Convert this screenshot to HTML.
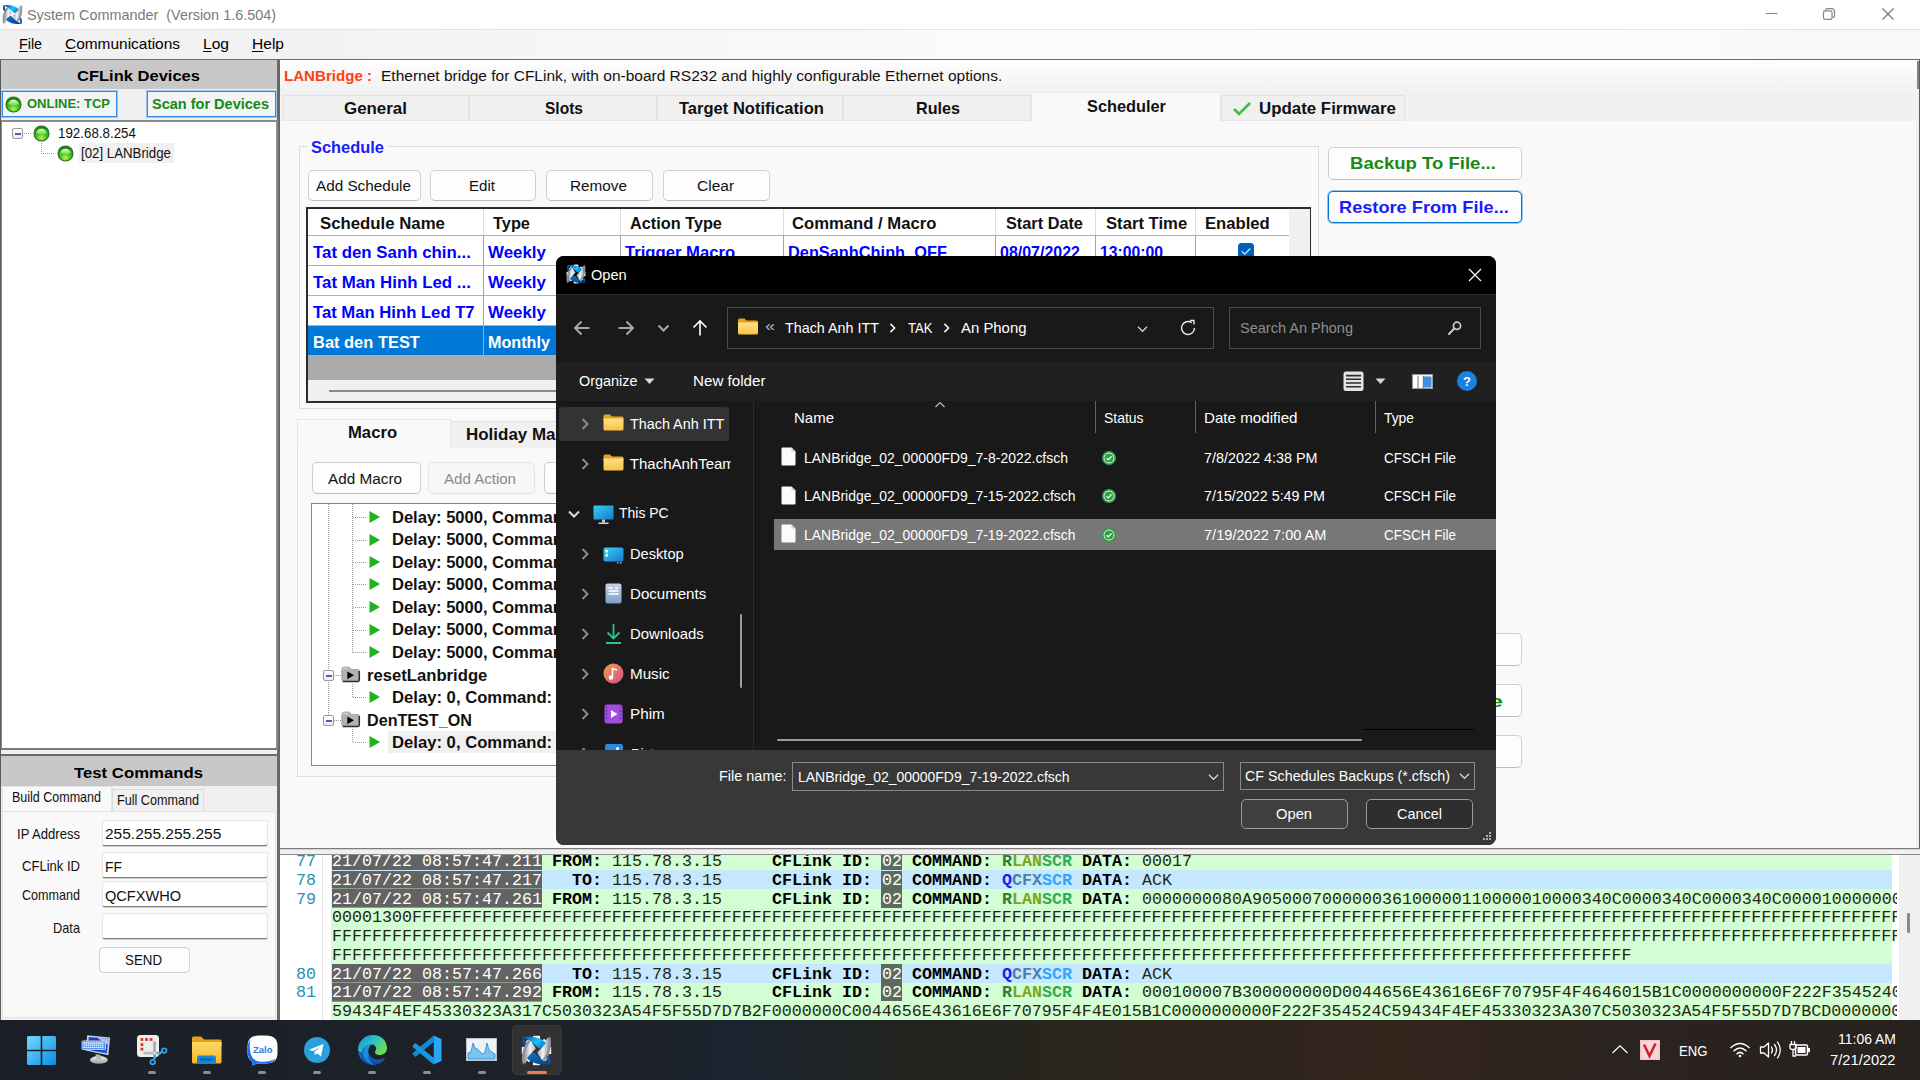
<!DOCTYPE html>
<html><head><meta charset="utf-8"><title>System Commander</title>
<style>
*{box-sizing:border-box;margin:0;padding:0}
html,body{width:1920px;height:1080px;overflow:hidden;background:#f0f0f0;font-family:"Liberation Sans",sans-serif}
.a{position:absolute}
.t{position:absolute;white-space:nowrap;line-height:1;transform-origin:0 50%}
.b{font-weight:bold}
svg{display:block;overflow:visible}
</style></head><body>
<!-- chrome -->
<div class="a" style="left:0px;top:0px;width:1920px;height:29px;background:#fff"></div>
<svg class="a" style="left:2px;top:4px" width="21" height="21" viewBox="2.800 2.800 26.400 26.400"><defs><linearGradient id="abt" x1="0" y1="0" x2="1" y2="0.6"><stop offset="0" stop-color="#0a57a8"/><stop offset="0.65" stop-color="#19c2ff"/><stop offset="1" stop-color="#0c7fd0"/></linearGradient><linearGradient id="adt" x1="0" y1="0" x2="1" y2="1"><stop offset="0" stop-color="#1173c4"/><stop offset="1" stop-color="#0a3f8c"/></linearGradient><linearGradient id="ast" x1="0" y1="0" x2="1" y2="0"><stop offset="0" stop-color="#9b9ea4"/><stop offset="0.5" stop-color="#f2f3f5"/><stop offset="1" stop-color="#a9acb2"/></linearGradient></defs><g fill="#f4f6f8"><rect x="13" y="3.500" width="6" height="6"/><rect x="13" y="22.500" width="6" height="6"/><rect x="3.500" y="13" width="6" height="6"/><rect x="22.500" y="13" width="6" height="6"/><rect x="7" y="7" width="5" height="5" transform="rotate(45 9.500 9.500)"/><rect x="20" y="7" width="5" height="5" transform="rotate(45 22.500 9.500)"/><rect x="7" y="20" width="5" height="5" transform="rotate(45 9.500 22.500)"/><rect x="20" y="20" width="5" height="5" transform="rotate(45 22.500 22.500)"/></g><path d="M27.500 4 C29.500 9 28 20 23 25 L21 23 C25 18 26.500 10 25.500 6 Z" fill="#8f939a"/><path d="M4.500 28 C2.500 23 4 12 9 7 L11 9 C7 14 5.500 22 6.500 26 Z" fill="#8f939a"/><path d="M6.500 27.500 C5 21 7 12.500 10.500 9 C13 10 14.500 12 15.500 14.500 C11.500 17.500 8.500 22.500 6.500 27.500 Z" fill="url(#ast)"/><path d="M25.500 4.500 C27 11 25 19.500 21.500 23 C19 22 17.500 20 16.500 17.500 C20.500 14.500 23.500 9.500 25.500 4.500 Z" fill="url(#ast)"/><path d="M4.500 4.500 C11 3 20 5 24 9.500 C22 12.500 20 14 18 14.500 C14.500 10.500 9.500 6.500 4.500 4.500 Z" fill="url(#abt)"/><path d="M4.500 4.500 C3.500 7 4 10 5.500 12 L7.500 10.500 C6.500 9 6 7 6.500 5.500 Z" fill="#0a4fa0"/><path d="M27.500 27.500 C21 29 12 27 8 22.500 C10 19.500 12 18 14 17.500 C17.500 21.500 22.500 25.500 27.500 27.500 Z" fill="url(#adt)"/><path d="M27.500 27.500 C28.500 25 28 22 26.500 20 L24.500 21.500 C25.500 23 26 25 25.500 26.500 Z" fill="#0b59ac"/></svg>
<div class="t" style="left:27.00px;top:7.15px;font-size:15px;color:#7a7a7a;transform:scaleX(0.9603);">System Commander &nbsp;(Version 1.6.504)</div>
<svg class="a" style="left:1750px;top:0" width="170" height="29" viewBox="0 0 170 29"><path d="M15.5 13.5 H27.5" stroke="#8a8a8a" stroke-width="1"/><rect x="73.500" y="10.800" width="8.500" height="8.500" rx="1.600" fill="none" stroke="#868686" stroke-width="1.200"/><path d="M75.700 10.800 V10 Q75.700 8.700 77.200 8.700 H81.500 Q84.500 8.700 84.500 11.700 V16 Q84.500 17.300 83.200 17.300 H82.200" fill="none" stroke="#868686" stroke-width="1.200"/><path d="M132.500 8.500 L143.500 19.500 M143.500 8.500 L132.500 19.500" stroke="#727272" stroke-width="1.100"/></svg>
<div class="a" style="left:0px;top:29px;width:1920px;height:30px;background:linear-gradient(90deg,#f0f0f0 0%,#f3f3f3 18%,#fafafa 48%,#fcfcfc 80%,#f8f8f8 100%);border-top:1px solid #e2e2e2"></div>
<div class="t" style="left:19.00px;top:36.25px;font-size:15px;color:#000;transform:scaleX(0.9515);"><span style="text-decoration:underline;text-underline-offset:2px">F</span>ile</div>
<div class="t" style="left:65.00px;top:36.25px;font-size:15px;color:#000;transform:scaleX(1.0294);"><span style="text-decoration:underline;text-underline-offset:2px">C</span>ommunications</div>
<div class="t" style="left:203.00px;top:36.25px;font-size:15px;color:#000;transform:scaleX(1.0388);"><span style="text-decoration:underline;text-underline-offset:2px">L</span>og</div>
<div class="t" style="left:252.00px;top:36.25px;font-size:15px;color:#000;transform:scaleX(1.0373);"><span style="text-decoration:underline;text-underline-offset:2px">H</span>elp</div>
<div class="a" style="left:0px;top:59px;width:1920px;height:1px;background:#6a6a6a"></div>
<div class="a" style="left:0px;top:60px;width:1920px;height:1px;background:#b4b4b4"></div>
<!-- left -->
<div class="a" style="left:0px;top:59px;width:279px;height:961px;background:#f0f0f0;border-left:1px solid #5c5c5c;border-right:2px solid #6a6a6a;border-top:1px solid #6a6a6a"></div>
<div class="a" style="left:1px;top:60px;width:276px;height:29px;background:#c8c8c8"></div>
<div class="t" style="left:77.00px;top:68.41px;font-size:15.5px;color:#000;font-weight:bold;transform:scaleX(1.0655);">CFLink Devices</div>
<div class="a" style="left:2px;top:91px;width:115px;height:26px;background:#f4f4f4;border:1px solid #2f8be6;box-shadow:0 0 0 1px rgba(60,145,230,.45);"></div>
<svg class="a" style="left:4.5px;top:95.5px" width="17" height="17" viewBox="0 0 17 17"><defs><radialGradient id="lg" cx="50%" cy="78%" r="70%"><stop offset="0" stop-color="#b8f05a"/><stop offset="0.45" stop-color="#43c91a"/><stop offset="1" stop-color="#0f8a06"/></radialGradient><linearGradient id="lh" x1="0" y1="0" x2="0" y2="1"><stop offset="0" stop-color="#f4ffe8" stop-opacity=".95"/><stop offset="1" stop-color="#b8f08a" stop-opacity=".55"/></linearGradient></defs><circle cx="8.5" cy="8.5" r="7.5" fill="url(#lg)" stroke="#2f6a22" stroke-width="1.1"/><path d="M3.1000000000000005 8.35 A5.55 6.0 0 0 1 13.899999999999999 8.35 Q8.5 9.4 3.1000000000000005 8.35 Z" fill="url(#lh)"/></svg>
<div class="t" style="left:27.00px;top:97.39px;font-size:13.5px;color:#168a16;font-weight:bold;transform:scaleX(0.9623);">ONLINE: TCP</div>
<div class="a" style="left:147px;top:91px;width:129px;height:26px;background:#f4f4f4;border:1px solid #2f8be6;box-shadow:0 0 0 1px rgba(60,145,230,.45);"></div>
<div class="t" style="left:152.00px;top:96.05px;font-size:15px;color:#168a16;font-weight:bold;transform:scaleX(0.9678);">Scan for Devices</div>
<div class="a" style="left:1px;top:120px;width:277px;height:630px;background:#fff;border:2px solid #8c8c8c;border-left:1px solid #8c8c8c;border-bottom:2px solid #7a7a7a"></div>
<div class="a" style="left:12px;top:128px;width:11px;height:11px;background:linear-gradient(#fff,#eee);border:1px solid #9a9a9a;border-radius:2px"></div>
<div class="a" style="left:14.5px;top:133px;width:6px;height:1.5px;background:#4a5fc0"></div>
<div class="a" style="left:24px;top:133px;width:7px;height:1px;background:repeating-linear-gradient(90deg,#999 0 1px,transparent 1px 2px)"></div>
<svg class="a" style="left:32.5px;top:124.5px" width="17" height="17" viewBox="0 0 17 17"><defs><radialGradient id="lg" cx="50%" cy="78%" r="70%"><stop offset="0" stop-color="#b8f05a"/><stop offset="0.45" stop-color="#43c91a"/><stop offset="1" stop-color="#0f8a06"/></radialGradient><linearGradient id="lh" x1="0" y1="0" x2="0" y2="1"><stop offset="0" stop-color="#f4ffe8" stop-opacity=".95"/><stop offset="1" stop-color="#b8f08a" stop-opacity=".55"/></linearGradient></defs><circle cx="8.5" cy="8.5" r="7.5" fill="url(#lg)" stroke="#2f6a22" stroke-width="1.1"/><path d="M3.1000000000000005 8.35 A5.55 6.0 0 0 1 13.899999999999999 8.35 Q8.5 9.4 3.1000000000000005 8.35 Z" fill="url(#lh)"/></svg>
<div class="t" style="left:58.00px;top:125.80px;font-size:14.7px;color:#111;transform:scaleX(0.9087);">192.68.8.254</div>
<div class="a" style="left:41px;top:141px;width:1px;height:12px;background:repeating-linear-gradient(180deg,#999 0 1px,transparent 1px 2px)"></div>
<div class="a" style="left:41px;top:153px;width:14px;height:1px;background:repeating-linear-gradient(90deg,#999 0 1px,transparent 1px 2px)"></div>
<svg class="a" style="left:56.5px;top:144.5px" width="17" height="17" viewBox="0 0 17 17"><defs><radialGradient id="lg" cx="50%" cy="78%" r="70%"><stop offset="0" stop-color="#b8f05a"/><stop offset="0.45" stop-color="#43c91a"/><stop offset="1" stop-color="#0f8a06"/></radialGradient><linearGradient id="lh" x1="0" y1="0" x2="0" y2="1"><stop offset="0" stop-color="#f4ffe8" stop-opacity=".95"/><stop offset="1" stop-color="#b8f08a" stop-opacity=".55"/></linearGradient></defs><circle cx="8.5" cy="8.5" r="7.5" fill="url(#lg)" stroke="#2f6a22" stroke-width="1.1"/><path d="M3.1000000000000005 8.35 A5.55 6.0 0 0 1 13.899999999999999 8.35 Q8.5 9.4 3.1000000000000005 8.35 Z" fill="url(#lh)"/></svg>
<div class="a" style="left:79px;top:143px;width:95px;height:20px;background:#f0f0f0"></div>
<div class="t" style="left:81.00px;top:145.80px;font-size:14.7px;color:#111;transform:scaleX(0.9028);">[02] LANBridge</div>
<div class="a" style="left:1px;top:754px;width:276px;height:2px;background:#6a6a6a"></div>
<div class="a" style="left:1px;top:756px;width:276px;height:30px;background:#c8c8c8"></div>
<div class="t" style="left:74.00px;top:764.90px;font-size:15.5px;color:#000;font-weight:bold;transform:scaleX(1.0801);">Test Commands</div>
<div class="a" style="left:2px;top:786px;width:110px;height:26px;background:#f9f9f9;border:1px solid #e3e3e3;border-bottom:none"></div>
<div class="t" style="left:12.00px;top:790.39px;font-size:14.5px;color:#111;transform:scaleX(0.8627);">Build Command</div>
<div class="a" style="left:112px;top:789px;width:92px;height:22px;background:#f0f0f0;border:1px solid #dcdcdc;border-bottom:none"></div>
<div class="t" style="left:117.00px;top:792.89px;font-size:14.5px;color:#111;transform:scaleX(0.8697);">Full Command</div>
<div class="a" style="left:2px;top:811px;width:274px;height:207px;background:#f9f9f9;border:1px solid #e3e3e3"></div>
<div class="t" style="left:17.00px;top:826.89px;font-size:14.5px;color:#111;transform:scaleX(0.9018);">IP Address</div>
<div class="a" style="left:102px;top:820px;width:166px;height:26px;background:#fff;border:1px solid #e6e6e6;border-bottom:1px solid #7e7e7e;box-shadow:0 1px 0 #cfcfcf;border-radius:3px"></div>
<div class="t" style="left:105.00px;top:826.40px;font-size:15.5px;color:#111;">255.255.255.255</div>
<div class="t" style="left:22.00px;top:859.39px;font-size:14.5px;color:#111;transform:scaleX(0.8998);">CFLink ID</div>
<div class="a" style="left:102px;top:852px;width:166px;height:26px;background:#fff;border:1px solid #e6e6e6;border-bottom:1px solid #7e7e7e;box-shadow:0 1px 0 #cfcfcf;border-radius:3px"></div>
<div class="t" style="left:105.00px;top:858.90px;font-size:15.5px;color:#111;transform:scaleX(0.8977);">FF</div>
<div class="t" style="left:22.00px;top:888.39px;font-size:14.5px;color:#111;transform:scaleX(0.8671);">Command</div>
<div class="a" style="left:102px;top:881px;width:166px;height:26px;background:#fff;border:1px solid #e6e6e6;border-bottom:1px solid #7e7e7e;box-shadow:0 1px 0 #cfcfcf;border-radius:3px"></div>
<div class="t" style="left:105.00px;top:887.90px;font-size:15.5px;color:#111;transform:scaleX(0.9390);">QCFXWHO</div>
<div class="t" style="left:53.00px;top:920.89px;font-size:14.5px;color:#111;transform:scaleX(0.8815);">Data</div>
<div class="a" style="left:102px;top:913px;width:166px;height:26px;background:#fff;border:1px solid #e6e6e6;border-bottom:1px solid #7e7e7e;box-shadow:0 1px 0 #cfcfcf;border-radius:3px"></div>
<div class="a" style="left:99px;top:947px;width:91px;height:26px;background:#fdfdfd;border:1px solid #d2d2d2;border-radius:4px"></div>
<div class="t" style="left:125.00px;top:952.40px;font-size:15.5px;color:#111;transform:scaleX(0.8592);">SEND</div>
<!-- right -->
<div class="a" style="left:280px;top:60px;width:1640px;height:789px;background:#f9f9f9"></div>
<div class="a" style="left:280px;top:60px;width:1640px;height:33px;background:linear-gradient(#fefefe,#f1f1f1)"></div>
<div class="a" style="left:280px;top:93px;width:1640px;height:28px;background:#f0f0f0"></div>
<div class="a" style="left:1916px;top:121px;width:3px;height:727px;background:#f0f0f0"></div>
<div class="a" style="left:1919px;top:60px;width:1px;height:790px;background:#5e5e5e"></div>
<div class="a" style="left:1917px;top:61px;width:2px;height:28px;background:#858585"></div>
<div class="a" style="left:280px;top:848px;width:1640px;height:1px;background:#7c7c7c"></div>
<div class="a" style="left:280px;top:849px;width:1640px;height:1px;background:#d4d4d4"></div>
<div class="a" style="left:280px;top:850px;width:1640px;height:4px;background:#f0f0f0"></div>
<div class="a" style="left:280px;top:854px;width:1640px;height:1px;background:#8c8c8c"></div>
<div class="a" style="left:278px;top:59px;width:2px;height:961px;background:#686868"></div>
<div class="t" style="left:284.00px;top:68.41px;font-size:15.5px;color:#ff4010;font-weight:bold;transform:scaleX(0.9733);">LANBridge :</div>
<div class="t" style="left:381.00px;top:68.41px;font-size:15.5px;color:#111;">Ethernet bridge for CFLink, with on-board RS232 and highly configurable Ethernet options.</div>
<div class="a" style="left:283px;top:95px;width:186px;height:26px;background:#f0f0f0;border:1px solid #e2e2e2;border-bottom:none"></div>
<div class="t" style="left:344.00px;top:100.63px;font-size:16.67px;color:#111;font-weight:bold;transform:scaleX(1.0148);">General</div>
<div class="a" style="left:469px;top:95px;width:188px;height:26px;background:#f0f0f0;border:1px solid #e2e2e2;border-bottom:none"></div>
<div class="t" style="left:545.00px;top:100.63px;font-size:16.67px;color:#111;font-weight:bold;transform:scaleX(0.9324);">Slots</div>
<div class="a" style="left:657px;top:95px;width:186px;height:26px;background:#f0f0f0;border:1px solid #e2e2e2;border-bottom:none"></div>
<div class="t" style="left:679.00px;top:100.63px;font-size:16.67px;color:#111;font-weight:bold;transform:scaleX(0.9930);">Target Notification</div>
<div class="a" style="left:843px;top:95px;width:188px;height:26px;background:#f0f0f0;border:1px solid #e2e2e2;border-bottom:none"></div>
<div class="t" style="left:916.00px;top:100.63px;font-size:16.67px;color:#111;font-weight:bold;transform:scaleX(0.9693);">Rules</div>
<div class="a" style="left:1221px;top:95px;width:184px;height:26px;background:#f0f0f0;border:1px solid #e2e2e2;border-bottom:none"></div>
<svg class="a" style="left:1232px;top:100px" width="20" height="16" viewBox="0 0 20 16"><path d="M2 9 L7 14 L18 3" fill="none" stroke="#3fc03a" stroke-width="2.6"/></svg>
<div class="t" style="left:1259.00px;top:100.63px;font-size:16.67px;color:#111;font-weight:bold;transform:scaleX(1.0129);">Update Firmware</div>
<div class="a" style="left:283px;top:120px;width:748px;height:1px;background:#e6e6e6"></div>
<div class="a" style="left:1221px;top:120px;width:184px;height:1px;background:#e6e6e6"></div>
<div class="a" style="left:1031px;top:92px;width:190px;height:30px;background:#f9f9f9;border:1px solid #e8e8e8;border-bottom:none"></div>
<div class="t" style="left:1087.00px;top:98.63px;font-size:16.67px;color:#111;font-weight:bold;transform:scaleX(0.9801);">Scheduler</div>
<div class="a" style="left:299px;top:146px;width:1020px;height:263px;border:1px solid #dcdcdc"></div>
<div class="a" style="left:308px;top:140px;width:80px;height:14px;background:#f9f9f9"></div>
<div class="t" style="left:311.00px;top:139.63px;font-size:16.67px;color:#1a1aff;font-weight:bold;transform:scaleX(0.9850);">Schedule</div>
<div class="a" style="left:308px;top:170px;width:113px;height:31px;background:#fdfdfd;border:1px solid #d0d0d0;border-bottom-color:#bdbdbd;border-radius:5px;"></div><div class="t" style="left:316.00px;top:178.41px;font-size:15.5px;color:#111;transform:scaleX(0.9842);">Add Schedule</div>
<div class="a" style="left:430px;top:170px;width:106px;height:31px;background:#fdfdfd;border:1px solid #d0d0d0;border-bottom-color:#bdbdbd;border-radius:5px;"></div><div class="t" style="left:469.00px;top:178.41px;font-size:15.5px;color:#111;transform:scaleX(0.9734);">Edit</div>
<div class="a" style="left:546px;top:170px;width:107px;height:31px;background:#fdfdfd;border:1px solid #d0d0d0;border-bottom-color:#bdbdbd;border-radius:5px;"></div><div class="t" style="left:570.00px;top:178.41px;font-size:15.5px;color:#111;transform:scaleX(0.9876);">Remove</div>
<div class="a" style="left:663px;top:170px;width:107px;height:31px;background:#fdfdfd;border:1px solid #d0d0d0;border-bottom-color:#bdbdbd;border-radius:5px;"></div><div class="t" style="left:697.00px;top:178.41px;font-size:15.5px;color:#111;">Clear</div>
<div class="a" style="left:306px;top:207px;width:1005px;height:196px;background:#ababab;border:2px solid #2c2c2c;border-right-width:1px"></div>
<div class="a" style="left:308px;top:209px;width:981px;height:27px;background:#fff;border-bottom:1px solid #b0b0b0"></div>
<div class="a" style="left:1289px;top:209px;width:21px;height:171px;background:#f0f0f0"></div>
<div class="a" style="left:308px;top:380px;width:1002px;height:21px;background:#f0f0f0"></div>
<div class="a" style="left:329px;top:390px;width:960px;height:2px;background:#8a8a8a"></div>
<div class="t" style="left:320.00px;top:215.63px;font-size:16.67px;color:#111;font-weight:bold;transform:scaleX(1.0069);">Schedule Name</div>
<div class="t" style="left:493.00px;top:215.63px;font-size:16.67px;color:#111;font-weight:bold;transform:scaleX(0.9822);">Type</div>
<div class="t" style="left:630.00px;top:215.63px;font-size:16.67px;color:#111;font-weight:bold;transform:scaleX(0.9770);">Action Type</div>
<div class="t" style="left:792.00px;top:215.63px;font-size:16.67px;color:#111;font-weight:bold;">Command / Macro</div>
<div class="t" style="left:1006.00px;top:215.63px;font-size:16.67px;color:#111;font-weight:bold;transform:scaleX(0.9778);">Start Date</div>
<div class="t" style="left:1106.00px;top:215.63px;font-size:16.67px;color:#111;font-weight:bold;">Start Time</div>
<div class="t" style="left:1205.00px;top:215.63px;font-size:16.67px;color:#111;font-weight:bold;">Enabled</div>
<div class="a" style="left:308px;top:236px;width:981px;height:30px;background:#fff;border-bottom:1px solid #b0b0b0"></div>
<div class="t" style="left:313.00px;top:245.13px;font-size:16.67px;color:#0000ff;font-weight:bold;transform:scaleX(1.0114);">Tat den Sanh chin...</div>
<div class="t" style="left:488.00px;top:245.13px;font-size:16.67px;color:#0000ff;font-weight:bold;transform:scaleX(1.0149);">Weekly</div>
<div class="a" style="left:308px;top:266px;width:981px;height:30px;background:#fff;border-bottom:1px solid #b0b0b0"></div>
<div class="t" style="left:313.00px;top:275.13px;font-size:16.67px;color:#0000ff;font-weight:bold;transform:scaleX(1.0115);">Tat Man Hinh Led ...</div>
<div class="t" style="left:488.00px;top:275.13px;font-size:16.67px;color:#0000ff;font-weight:bold;transform:scaleX(1.0149);">Weekly</div>
<div class="a" style="left:308px;top:296px;width:981px;height:30px;background:#fff;border-bottom:1px solid #b0b0b0"></div>
<div class="t" style="left:313.00px;top:305.13px;font-size:16.67px;color:#0000ff;font-weight:bold;">Tat Man Hinh Led T7</div>
<div class="t" style="left:488.00px;top:305.13px;font-size:16.67px;color:#0000ff;font-weight:bold;transform:scaleX(1.0149);">Weekly</div>
<div class="a" style="left:308px;top:326px;width:981px;height:30px;background:#0078d7;border-bottom:1px solid #b0b0b0"></div>
<div class="t" style="left:313.00px;top:335.13px;font-size:16.67px;color:#fff;font-weight:bold;transform:scaleX(0.9874);">Bat den TEST</div>
<div class="t" style="left:488.00px;top:335.13px;font-size:16.67px;color:#fff;font-weight:bold;transform:scaleX(0.9704);">Monthly</div>
<div class="t" style="left:625.00px;top:245.13px;font-size:16.67px;color:#0000ff;font-weight:bold;">Trigger Macro</div>
<div class="t" style="left:788.00px;top:245.13px;font-size:16.67px;color:#0000ff;font-weight:bold;transform:scaleX(0.9810);">DenSanhChinh_OFF</div>
<div class="t" style="left:1000.00px;top:245.13px;font-size:16.67px;color:#0000ff;font-weight:bold;transform:scaleX(0.9588);">08/07/2022</div>
<div class="t" style="left:1100.00px;top:245.13px;font-size:16.67px;color:#0000ff;font-weight:bold;transform:scaleX(0.9441);">13:00:00</div>
<div class="a" style="left:1238px;top:243px;width:16px;height:16px;background:#005fb8;border-radius:3.500px"></div>
<svg class="a" style="left:1238px;top:243px" width="16" height="16" viewBox="0 0 16 16"><path d="M3.800 8.300 L6.800 11.200 L12.200 5.500" fill="none" stroke="#dbe9f7" stroke-width="1.200"/></svg>
<div class="a" style="left:483px;top:209px;width:1px;height:26px;background:#dedede"></div>
<div class="a" style="left:483px;top:235px;width:1px;height:121px;background:#a6a6a6"></div>
<div class="a" style="left:620px;top:209px;width:1px;height:26px;background:#dedede"></div>
<div class="a" style="left:620px;top:235px;width:1px;height:121px;background:#a6a6a6"></div>
<div class="a" style="left:783px;top:209px;width:1px;height:26px;background:#dedede"></div>
<div class="a" style="left:783px;top:235px;width:1px;height:121px;background:#a6a6a6"></div>
<div class="a" style="left:995px;top:209px;width:1px;height:26px;background:#dedede"></div>
<div class="a" style="left:995px;top:235px;width:1px;height:121px;background:#a6a6a6"></div>
<div class="a" style="left:1095px;top:209px;width:1px;height:26px;background:#dedede"></div>
<div class="a" style="left:1095px;top:235px;width:1px;height:121px;background:#a6a6a6"></div>
<div class="a" style="left:1195px;top:209px;width:1px;height:26px;background:#dedede"></div>
<div class="a" style="left:1195px;top:235px;width:1px;height:121px;background:#a6a6a6"></div>
<div class="a" style="left:1328px;top:147px;width:194px;height:33px;background:#fdfdfd;border:1px solid #d0d0d0;border-bottom-color:#bdbdbd;border-radius:5px;"></div><div class="t" style="left:1350.00px;top:155.32px;font-size:17.3px;color:#168a16;font-weight:bold;transform:scaleX(1.0721);">Backup To File...</div>
<div class="a" style="left:1328px;top:191px;width:194px;height:32px;background:#fdfdfd;border:1px solid #d0d0d0;border-bottom-color:#bdbdbd;border-radius:5px;border:1px solid #0078d7;box-shadow:0 0 0 1px rgba(0,120,215,.4);"></div><div class="t" style="left:1339.00px;top:198.82px;font-size:17.3px;color:#1a1aff;font-weight:bold;transform:scaleX(1.0526);">Restore From File...</div>
<div class="a" style="left:1400px;top:633px;width:122px;height:33px;background:#fdfdfd;border:1px solid #d0d0d0;border-bottom-color:#bdbdbd;border-radius:5px;"></div><div class="t" style="left:0.00px;top:642.40px;font-size:15.5px;color:#111;"></div>
<div class="a" style="left:1400px;top:684px;width:122px;height:33px;background:#fdfdfd;border:1px solid #d0d0d0;border-bottom-color:#bdbdbd;border-radius:5px;"></div><div class="t" style="left:0.00px;top:693.40px;font-size:15.5px;color:#111;"></div>
<div class="t" style="left:1489.00px;top:693.32px;font-size:17.3px;color:#168a16;font-weight:bold;transform:scaleX(1.4550);">e</div>
<div class="a" style="left:1400px;top:735px;width:122px;height:33px;background:#fdfdfd;border:1px solid #d0d0d0;border-bottom-color:#bdbdbd;border-radius:5px;"></div><div class="t" style="left:0.00px;top:744.40px;font-size:15.5px;color:#111;"></div>
<div class="a" style="left:297px;top:447px;width:1030px;height:330px;border:1px solid #e0e0e0;background:#f9f9f9"></div>
<div class="a" style="left:450px;top:421px;width:160px;height:27px;background:#f0f0f0;border:1px solid #e2e2e2;border-bottom:none"></div>
<div class="t" style="left:466.00px;top:427.13px;font-size:16.67px;color:#111;font-weight:bold;transform:scaleX(1.0181);">Holiday Macro</div>
<div class="a" style="left:297px;top:419px;width:154px;height:30px;background:#f9f9f9;border:1px solid #e6e6e6;border-bottom:none"></div>
<div class="t" style="left:348.00px;top:424.63px;font-size:16.67px;color:#111;font-weight:bold;">Macro</div>
<div class="a" style="left:312px;top:462px;width:109px;height:32px;background:#fdfdfd;border:1px solid #d0d0d0;border-bottom-color:#bdbdbd;border-radius:5px;"></div><div class="t" style="left:328.00px;top:470.90px;font-size:15.5px;color:#111;transform:scaleX(0.9873);">Add Macro</div>
<div class="a" style="left:428px;top:462px;width:107px;height:32px;background:#fdfdfd;border:1px solid #d0d0d0;border-bottom-color:#bdbdbd;border-radius:5px;background:#f7f7f7;border-color:#e4e4e4;"></div><div class="t" style="left:444.00px;top:470.90px;font-size:15.5px;color:#8a8a8a;transform:scaleX(0.9715);">Add Action</div>
<div class="a" style="left:544px;top:462px;width:107px;height:32px;background:#fdfdfd;border:1px solid #d0d0d0;border-bottom-color:#bdbdbd;border-radius:5px;"></div><div class="t" style="left:0.00px;top:470.90px;font-size:15.5px;color:#111;"></div>
<div class="a" style="left:311px;top:503px;width:700px;height:263px;background:#fff;border:1px solid #828790"></div>
<div class="a" style="left:328px;top:504px;width:1px;height:217px;background:repeating-linear-gradient(180deg,#9a9a9a 0 1px,transparent 1px 2px)"></div>
<div class="a" style="left:352px;top:504px;width:1px;height:149px;background:repeating-linear-gradient(180deg,#9a9a9a 0 1px,transparent 1px 2px)"></div>
<div class="a" style="left:353px;top:517px;width:14px;height:1px;background:repeating-linear-gradient(90deg,#9a9a9a 0 1px,transparent 1px 2px)"></div>
<svg class="a" style="left:369px;top:510px" width="12" height="14" viewBox="0 0 12 14"><path d="M0.5 1 L11 7 L0.5 13 Z" fill="#1fb31f"/></svg>
<div class="t" style="left:392.00px;top:509.63px;font-size:16.67px;color:#111;font-weight:bold;transform:scaleX(0.9917);">Delay: 5000, Command:</div>
<div class="a" style="left:353px;top:540px;width:14px;height:1px;background:repeating-linear-gradient(90deg,#9a9a9a 0 1px,transparent 1px 2px)"></div>
<svg class="a" style="left:369px;top:533px" width="12" height="14" viewBox="0 0 12 14"><path d="M0.5 1 L11 7 L0.5 13 Z" fill="#1fb31f"/></svg>
<div class="t" style="left:392.00px;top:532.13px;font-size:16.67px;color:#111;font-weight:bold;transform:scaleX(0.9917);">Delay: 5000, Command:</div>
<div class="a" style="left:353px;top:562px;width:14px;height:1px;background:repeating-linear-gradient(90deg,#9a9a9a 0 1px,transparent 1px 2px)"></div>
<svg class="a" style="left:369px;top:555px" width="12" height="14" viewBox="0 0 12 14"><path d="M0.5 1 L11 7 L0.5 13 Z" fill="#1fb31f"/></svg>
<div class="t" style="left:392.00px;top:554.63px;font-size:16.67px;color:#111;font-weight:bold;transform:scaleX(0.9917);">Delay: 5000, Command:</div>
<div class="a" style="left:353px;top:584px;width:14px;height:1px;background:repeating-linear-gradient(90deg,#9a9a9a 0 1px,transparent 1px 2px)"></div>
<svg class="a" style="left:369px;top:577px" width="12" height="14" viewBox="0 0 12 14"><path d="M0.5 1 L11 7 L0.5 13 Z" fill="#1fb31f"/></svg>
<div class="t" style="left:392.00px;top:577.13px;font-size:16.67px;color:#111;font-weight:bold;transform:scaleX(0.9917);">Delay: 5000, Command:</div>
<div class="a" style="left:353px;top:607px;width:14px;height:1px;background:repeating-linear-gradient(90deg,#9a9a9a 0 1px,transparent 1px 2px)"></div>
<svg class="a" style="left:369px;top:600px" width="12" height="14" viewBox="0 0 12 14"><path d="M0.5 1 L11 7 L0.5 13 Z" fill="#1fb31f"/></svg>
<div class="t" style="left:392.00px;top:599.63px;font-size:16.67px;color:#111;font-weight:bold;transform:scaleX(0.9917);">Delay: 5000, Command:</div>
<div class="a" style="left:353px;top:630px;width:14px;height:1px;background:repeating-linear-gradient(90deg,#9a9a9a 0 1px,transparent 1px 2px)"></div>
<svg class="a" style="left:369px;top:623px" width="12" height="14" viewBox="0 0 12 14"><path d="M0.5 1 L11 7 L0.5 13 Z" fill="#1fb31f"/></svg>
<div class="t" style="left:392.00px;top:622.13px;font-size:16.67px;color:#111;font-weight:bold;transform:scaleX(0.9917);">Delay: 5000, Command:</div>
<div class="a" style="left:353px;top:652px;width:14px;height:1px;background:repeating-linear-gradient(90deg,#9a9a9a 0 1px,transparent 1px 2px)"></div>
<svg class="a" style="left:369px;top:645px" width="12" height="14" viewBox="0 0 12 14"><path d="M0.5 1 L11 7 L0.5 13 Z" fill="#1fb31f"/></svg>
<div class="t" style="left:392.00px;top:644.63px;font-size:16.67px;color:#111;font-weight:bold;transform:scaleX(0.9917);">Delay: 5000, Command:</div>
<div class="a" style="left:323px;top:670px;width:11px;height:11px;background:linear-gradient(#fff,#eee);border:1px solid #9a9a9a;border-radius:2px"></div><div class="a" style="left:325.5px;top:675px;width:6px;height:1.5px;background:#4a5fc0"></div>
<div class="a" style="left:334px;top:675px;width:7px;height:1px;background:repeating-linear-gradient(90deg,#9a9a9a 0 1px,transparent 1px 2px)"></div>
<svg class="a" style="left:341px;top:665.5px" width="20" height="17" viewBox="0 0 20 17"><path d="M0.800 4 Q0.800 1 3.500 1 H7 Q8.500 1 9.500 2.300 L10.500 3.500 H16.500 Q18.500 3.500 18.500 5.500 V13.500 Q18.500 15.200 17 15.200 H2.300 Q0.800 15.200 0.800 13.700 Z" fill="#b2b2b2" stroke="#9a9a9a" stroke-width="0.800"/><path d="M2.200 3.800 Q2.200 2.300 3.800 2.300 H7.200" fill="none" stroke="#dcdcdc" stroke-width="1"/><path d="M18.300 5 V14 Q18.300 15.400 17 15.400 H1.800" fill="none" stroke="#2c2c2c" stroke-width="1.500"/><path d="M6.300 5.500 L13 9.300 L6.300 13.200 Z" fill="#000"/></svg>
<div class="t" style="left:367.00px;top:667.63px;font-size:16.67px;color:#111;font-weight:bold;">resetLanbridge</div>
<div class="a" style="left:323px;top:715px;width:11px;height:11px;background:linear-gradient(#fff,#eee);border:1px solid #9a9a9a;border-radius:2px"></div><div class="a" style="left:325.5px;top:720px;width:6px;height:1.5px;background:#4a5fc0"></div>
<div class="a" style="left:334px;top:720px;width:7px;height:1px;background:repeating-linear-gradient(90deg,#9a9a9a 0 1px,transparent 1px 2px)"></div>
<svg class="a" style="left:341px;top:710.5px" width="20" height="17" viewBox="0 0 20 17"><path d="M0.800 4 Q0.800 1 3.500 1 H7 Q8.500 1 9.500 2.300 L10.500 3.500 H16.500 Q18.500 3.500 18.500 5.500 V13.500 Q18.500 15.200 17 15.200 H2.300 Q0.800 15.200 0.800 13.700 Z" fill="#b2b2b2" stroke="#9a9a9a" stroke-width="0.800"/><path d="M2.200 3.800 Q2.200 2.300 3.800 2.300 H7.200" fill="none" stroke="#dcdcdc" stroke-width="1"/><path d="M18.300 5 V14 Q18.300 15.400 17 15.400 H1.800" fill="none" stroke="#2c2c2c" stroke-width="1.500"/><path d="M6.300 5.500 L13 9.300 L6.300 13.200 Z" fill="#000"/></svg>
<div class="t" style="left:367.00px;top:712.63px;font-size:16.67px;color:#111;font-weight:bold;transform:scaleX(0.9689);">DenTEST_ON</div>
<div class="a" style="left:352px;top:684px;width:1px;height:14px;background:repeating-linear-gradient(180deg,#9a9a9a 0 1px,transparent 1px 2px)"></div>
<div class="a" style="left:353px;top:697px;width:14px;height:1px;background:repeating-linear-gradient(90deg,#9a9a9a 0 1px,transparent 1px 2px)"></div>
<svg class="a" style="left:369px;top:690px" width="12" height="14" viewBox="0 0 12 14"><path d="M0.5 1 L11 7 L0.5 13 Z" fill="#1fb31f"/></svg>
<div class="t" style="left:392.00px;top:690.13px;font-size:16.67px;color:#111;font-weight:bold;">Delay: 0, Command:</div>
<div class="a" style="left:388px;top:731px;width:300px;height:22px;background:#f0f0f0"></div>
<div class="a" style="left:352px;top:729px;width:1px;height:14px;background:repeating-linear-gradient(180deg,#9a9a9a 0 1px,transparent 1px 2px)"></div>
<div class="a" style="left:353px;top:742px;width:14px;height:1px;background:repeating-linear-gradient(90deg,#9a9a9a 0 1px,transparent 1px 2px)"></div>
<svg class="a" style="left:369px;top:735px" width="12" height="14" viewBox="0 0 12 14"><path d="M0.5 1 L11 7 L0.5 13 Z" fill="#1fb31f"/></svg>
<div class="t" style="left:392.00px;top:735.13px;font-size:16.67px;color:#111;font-weight:bold;">Delay: 0, Command:</div>
<!-- log -->
<div class="a" style="left:280px;top:855px;width:1639px;height:165px;background:#fff;overflow:hidden;font-family:'Liberation Mono',monospace;font-size:16.67px;line-height:18.75px;white-space:pre">
<div class="a" style="left:51px;top:-3.40px;width:1561px;height:19px;background:#d3fdd3"></div>
<div class="a" style="left:16px;top:-1.80px;width:20px;color:#2b91af;text-align:right">77</div>
<div class="a" style="left:52px;top:-3.10px;width:209.5px;height:17.6px;background:#636363;box-shadow:0 1px 0 #8f9a8f"></div>
<div class="a" style="left:52px;top:-1.80px;color:#fff">21/07/22 08:57:47.211</div>
<div class="a" style="left:272.0px;top:-1.80px;font-weight:bold">FROM:</div>
<div class="a" style="left:332.0px;top:-1.80px;color:#26260e">115.78.3.15</div>
<div class="a" style="left:492.0px;top:-1.80px;font-weight:bold">CFLink ID:</div>
<div class="a" style="left:601.0px;top:-3.10px;width:21.0px;height:18.2px;background:#5d6b5d"></div>
<div class="a" style="left:602.0px;top:-1.80px;color:#fff">02</div>
<div class="a" style="left:632.0px;top:-1.80px;font-weight:bold">COMMAND:</div>
<div class="a" style="left:722.0px;top:-1.80px;font-weight:bold"><span style="color:#2f7d32">R</span><span style="color:#7ba51c">LAN</span><span style="color:#2eab5c">SCR</span></div>
<div class="a" style="left:802.0px;top:-1.80px;font-weight:bold">DATA:</div>
<div class="a" style="left:862.0px;top:-1.80px;color:#26260e">00017</div>
<div class="a" style="left:51px;top:15.35px;width:1561px;height:19px;background:#c5e8ff"></div>
<div class="a" style="left:16px;top:16.95px;width:20px;color:#2b91af;text-align:right">78</div>
<div class="a" style="left:52px;top:15.65px;width:209.5px;height:17.6px;background:#636363;box-shadow:0 1px 0 #8f9a8f"></div>
<div class="a" style="left:52px;top:16.95px;color:#fff">21/07/22 08:57:47.217</div>
<div class="a" style="left:272.0px;top:16.95px;font-weight:bold">  TO:</div>
<div class="a" style="left:332.0px;top:16.95px;color:#26260e">115.78.3.15</div>
<div class="a" style="left:492.0px;top:16.95px;font-weight:bold">CFLink ID:</div>
<div class="a" style="left:601.0px;top:15.65px;width:21.0px;height:18.2px;background:#5d6b5d"></div>
<div class="a" style="left:602.0px;top:16.95px;color:#fff">02</div>
<div class="a" style="left:632.0px;top:16.95px;font-weight:bold">COMMAND:</div>
<div class="a" style="left:722.0px;top:16.95px;font-weight:bold"><span style="color:#1a1aff">Q</span><span style="color:#4a7fae">CFX</span><span style="color:#2fa6ff">SCR</span></div>
<div class="a" style="left:802.0px;top:16.95px;font-weight:bold">DATA:</div>
<div class="a" style="left:862.0px;top:16.95px;color:#26260e">ACK</div>
<div class="a" style="left:51px;top:34.10px;width:1561px;height:19px;background:#d3fdd3"></div>
<div class="a" style="left:16px;top:35.70px;width:20px;color:#2b91af;text-align:right">79</div>
<div class="a" style="left:52px;top:34.40px;width:209.5px;height:17.6px;background:#636363;box-shadow:0 1px 0 #8f9a8f"></div>
<div class="a" style="left:52px;top:35.70px;color:#fff">21/07/22 08:57:47.261</div>
<div class="a" style="left:272.0px;top:35.70px;font-weight:bold">FROM:</div>
<div class="a" style="left:332.0px;top:35.70px;color:#26260e">115.78.3.15</div>
<div class="a" style="left:492.0px;top:35.70px;font-weight:bold">CFLink ID:</div>
<div class="a" style="left:601.0px;top:34.40px;width:21.0px;height:18.2px;background:#5d6b5d"></div>
<div class="a" style="left:602.0px;top:35.70px;color:#fff">02</div>
<div class="a" style="left:632.0px;top:35.70px;font-weight:bold">COMMAND:</div>
<div class="a" style="left:722.0px;top:35.70px;font-weight:bold"><span style="color:#2f7d32">R</span><span style="color:#7ba51c">LAN</span><span style="color:#2eab5c">SCR</span></div>
<div class="a" style="left:802.0px;top:35.70px;font-weight:bold">DATA:</div>
<div class="a" style="left:862.0px;top:35.70px;color:#26260e">0000000080A905000700000036100000110000010000340C0000340C0000340C00001000000000</div>
<div class="a" style="left:51px;top:52.85px;width:1561px;height:19px;background:#d3fdd3"></div>
<div class="a" style="left:52px;top:54.45px;color:#26260e">00001300FFFFFFFFFFFFFFFFFFFFFFFFFFFFFFFFFFFFFFFFFFFFFFFFFFFFFFFFFFFFFFFFFFFFFFFFFFFFFFFFFFFFFFFFFFFFFFFFFFFFFFFFFFFFFFFFFFFFFFFFFFFFFFFFFFFFFFFFFFFFFFFFFFFFFFFFFFFFFFFF</div>
<div class="a" style="left:51px;top:71.60px;width:1561px;height:19px;background:#d3fdd3"></div>
<div class="a" style="left:52px;top:73.20px;color:#26260e">FFFFFFFFFFFFFFFFFFFFFFFFFFFFFFFFFFFFFFFFFFFFFFFFFFFFFFFFFFFFFFFFFFFFFFFFFFFFFFFFFFFFFFFFFFFFFFFFFFFFFFFFFFFFFFFFFFFFFFFFFFFFFFFFFFFFFFFFFFFFFFFFFFFFFFFFFFFFFFFFFFFFFFFFFF</div>
<div class="a" style="left:51px;top:90.35px;width:1561px;height:19px;background:#d3fdd3"></div>
<div class="a" style="left:52px;top:91.95px;color:#26260e">FFFFFFFFFFFFFFFFFFFFFFFFFFFFFFFFFFFFFFFFFFFFFFFFFFFFFFFFFFFFFFFFFFFFFFFFFFFFFFFFFFFFFFFFFFFFFFFFFFFFFFFFFFFFFFFFFFFFFFFFFFFFFFFFFF</div>
<div class="a" style="left:51px;top:109.10px;width:1561px;height:19px;background:#c5e8ff"></div>
<div class="a" style="left:16px;top:110.70px;width:20px;color:#2b91af;text-align:right">80</div>
<div class="a" style="left:52px;top:109.40px;width:209.5px;height:17.6px;background:#636363;box-shadow:0 1px 0 #8f9a8f"></div>
<div class="a" style="left:52px;top:110.70px;color:#fff">21/07/22 08:57:47.266</div>
<div class="a" style="left:272.0px;top:110.70px;font-weight:bold">  TO:</div>
<div class="a" style="left:332.0px;top:110.70px;color:#26260e">115.78.3.15</div>
<div class="a" style="left:492.0px;top:110.70px;font-weight:bold">CFLink ID:</div>
<div class="a" style="left:601.0px;top:109.40px;width:21.0px;height:18.2px;background:#5d6b5d"></div>
<div class="a" style="left:602.0px;top:110.70px;color:#fff">02</div>
<div class="a" style="left:632.0px;top:110.70px;font-weight:bold">COMMAND:</div>
<div class="a" style="left:722.0px;top:110.70px;font-weight:bold"><span style="color:#1a1aff">Q</span><span style="color:#4a7fae">CFX</span><span style="color:#2fa6ff">SCR</span></div>
<div class="a" style="left:802.0px;top:110.70px;font-weight:bold">DATA:</div>
<div class="a" style="left:862.0px;top:110.70px;color:#26260e">ACK</div>
<div class="a" style="left:51px;top:127.85px;width:1561px;height:19px;background:#d3fdd3"></div>
<div class="a" style="left:16px;top:129.45px;width:20px;color:#2b91af;text-align:right">81</div>
<div class="a" style="left:52px;top:128.15px;width:209.5px;height:17.6px;background:#636363;box-shadow:0 1px 0 #8f9a8f"></div>
<div class="a" style="left:52px;top:129.45px;color:#fff">21/07/22 08:57:47.292</div>
<div class="a" style="left:272.0px;top:129.45px;font-weight:bold">FROM:</div>
<div class="a" style="left:332.0px;top:129.45px;color:#26260e">115.78.3.15</div>
<div class="a" style="left:492.0px;top:129.45px;font-weight:bold">CFLink ID:</div>
<div class="a" style="left:601.0px;top:128.15px;width:21.0px;height:18.2px;background:#5d6b5d"></div>
<div class="a" style="left:602.0px;top:129.45px;color:#fff">02</div>
<div class="a" style="left:632.0px;top:129.45px;font-weight:bold">COMMAND:</div>
<div class="a" style="left:722.0px;top:129.45px;font-weight:bold"><span style="color:#2f7d32">R</span><span style="color:#7ba51c">LAN</span><span style="color:#2eab5c">SCR</span></div>
<div class="a" style="left:802.0px;top:129.45px;font-weight:bold">DATA:</div>
<div class="a" style="left:862.0px;top:129.45px;color:#26260e">000100007B300000000D0044656E43616E6F70795F4F4646015B1C0000000000F222F3545240000</div>
<div class="a" style="left:51px;top:146.60px;width:1561px;height:19px;background:#d3fdd3"></div>
<div class="a" style="left:52px;top:148.20px;color:#26260e">59434F4EF45330323A317C5030323A54F5F55D7D7B2F0000000C0044656E43616E6F70795F4F4E015B1C0000000000F222F354524C59434F4EF45330323A307C5030323A54F5F55D7D7BCD00000000</div>
<div class="a" style="left:1617px;top:0;width:22px;height:165px;background:#fff"></div>
<div class="a" style="left:1619px;top:0;width:20px;height:165px;background:#f0f0f0"></div>
<div class="a" style="left:1627px;top:57.500px;width:3px;height:20px;background:#8a8a8a;border-radius:1px"></div>
<div class="a" style="left:1638.500px;top:0;width:1px;height:165px;background:#5e5e5e"></div>
<div class="a" style="left:42px;top:0;width:1px;height:165px;background:#e4e4e4"></div>
</div>
<!-- taskbar -->
<div class="a" style="left:0px;top:1020px;width:1920px;height:60px;background:linear-gradient(90deg,#1a1e27 0,#1b2029 8%,#1e2128 29%,#1c2430 39%,#22241f 47%,#2a241e 57%,#33251c 73%,#2b2320 84%,#272220 100%)"></div>
<svg class="a" style="left:27px;top:1036px" width="29" height="29" viewBox="0 0 29 29"><defs><linearGradient id="wl" x1="0" y1="0" x2="1" y2="1"><stop offset="0" stop-color="#6fdcfb"/><stop offset="1" stop-color="#0d8be6"/></linearGradient></defs><path d="M1.5 0 H13.7 V13.7 H0 V1.5 Q0 0 1.5 0 Z M15.3 0 H27.5 Q29 0 29 1.5 V13.7 H15.3 Z M0 15.3 H13.7 V29 H1.5 Q0 29 0 27.5 Z M15.3 15.3 H29 V27.5 Q29 29 27.5 29 H15.3 Z" fill="url(#wl)"/></svg>
<svg class="a" style="left:81px;top:1034px" width="31" height="31" viewBox="0 0 31 31"><defs><linearGradient id="osk1" x1="0" y1="0" x2="0" y2="1"><stop offset="0" stop-color="#f2f2f2"/><stop offset="1" stop-color="#9c9c9c"/></linearGradient><linearGradient id="osk2" x1="0" y1="0" x2="1" y2="1"><stop offset="0" stop-color="#2a4fe0"/><stop offset="0.5" stop-color="#0c1fa8"/><stop offset="1" stop-color="#3a6ae8"/></linearGradient></defs><ellipse cx="17.900" cy="25.900" rx="8.900" ry="3.900" fill="url(#osk1)"/><path d="M14.500 20 L19.500 21 L20.500 25.500 L15.500 25.500 Z" fill="#b9b9b9"/><path d="M6.200 1.200 L29.100 3.500 L27.400 21.200 L4.500 16.600 Z" fill="#c4cee0"/><path d="M7.900 2.900 L27.400 4.800 L25.900 19.500 L6.200 15.500 Z" fill="url(#osk2)"/><path d="M16 3.700 L27.400 4.800 L26.800 11 Z" fill="#e8eefc" opacity=".75"/><rect x="1" y="6.900" width="23.500" height="8.600" rx="0.800" fill="#5a9aea" stroke="#cfe0fa" stroke-width="0.800"/><path d="M2.600 9 H23 M2.600 11.200 H23 M2.600 13.400 H23" stroke="#fff" stroke-width="1.300" stroke-dasharray="1.300 0.700"/></svg>
<svg class="a" style="left:136px;top:1034px" width="32" height="32" viewBox="0 0 32 32"><rect x="1" y="1" width="22" height="22" rx="3.500" fill="#eeeeee"/><g fill="#e23a1a"><rect x="4.500" y="4" width="2.800" height="2.900"/><rect x="9.100" y="4" width="2.800" height="2.900"/><rect x="13.600" y="4" width="2.900" height="2.900"/><rect x="4.500" y="9.200" width="2.800" height="2.800"/><rect x="4.500" y="13.800" width="2.800" height="2.800"/></g><path d="M17.100 7.500 H19.900 V24.500 L18.500 25.200 L17.100 22 Z" fill="#a9aeb4"/><path d="M7.300 17.800 H22 L25.700 19.200 L24 20.600 H7.300 Z" fill="#b9bdc2"/><circle cx="18.600" cy="19.200" r="0.900" fill="#f0f0f0"/><g fill="none" stroke="#2aa3ea" stroke-width="1.700"><circle cx="28.200" cy="16.600" r="2.300"/><circle cx="16.700" cy="28.100" r="2.300"/><path d="M26.200 17.700 L21 19.300 M17.700 26 L19 21"/></g></svg>
<div class="a" style="left:147.5px;top:1070.5px;width:8px;height:3px;background:#8d8d8d;border-radius:2px"></div>
<svg class="a" style="left:191px;top:1036px" width="31" height="28" viewBox="0 0 31 28"><defs><linearGradient id="fo" x1="0" y1="0" x2="0" y2="1"><stop offset="0" stop-color="#ffd965"/><stop offset="1" stop-color="#f6b62c"/></linearGradient></defs><path d="M1 2 Q1 0.5 2.5 0.5 H10 L13 3.5 H29 Q30.5 3.5 30.5 5 V10 H1 Z" fill="#e9a016"/><path d="M1 6 H30.5 V26 Q30.5 27.5 29 27.5 H2.5 Q1 27.5 1 26 Z" fill="url(#fo)"/><path d="M6 27.5 V21.5 Q6 19.5 8 19.5 H23 Q25 19.5 25 21.5 V27.5 Z" fill="#1686d6"/><rect x="9" y="22.5" width="13" height="2" rx="1" fill="#0c5fa8"/></svg>
<div class="a" style="left:202.5px;top:1070.5px;width:8px;height:3px;background:#8d8d8d;border-radius:2px"></div>
<svg class="a" style="left:247px;top:1035px" width="31" height="31" viewBox="0 0 31 31"><path d="M12 0.500 H19 Q30.500 0.500 30.500 11 V18 Q30.500 28.500 19 28.500 H10 L5 30.500 L5.500 27 Q0.500 24 0.500 18 V11 Q0.500 0.500 12 0.500 Z" fill="#fff"/><path d="M3.500 4.500 Q0 8 0.500 16 Q0.500 24 5.500 27 L5 30.500 L10 28.500 H19 Q26 28.500 29 23.500 Q22 27.500 12 26.500 Q5 25 3.500 18 Q2 11 3.500 4.500 Z" fill="#1f6ff2"/><text x="15.8" y="17.5" font-family="Liberation Sans,sans-serif" font-weight="bold" font-size="9.5" fill="#2b78f0" text-anchor="middle">Zalo</text></svg>
<div class="a" style="left:258.0px;top:1070.5px;width:8px;height:3px;background:#8d8d8d;border-radius:2px"></div>
<svg class="a" style="left:304px;top:1037px" width="26" height="26" viewBox="0 0 26 26"><circle cx="13" cy="13" r="13" fill="#2ba0dc"/><path d="M5 12.8 L19.5 7 L17 19.5 L12.8 16.2 L10.8 18.3 L10.5 14.8 L16.5 9.8 L9 14.2 Z" fill="#fff"/></svg>
<div class="a" style="left:313.0px;top:1070.5px;width:8px;height:3px;background:#8d8d8d;border-radius:2px"></div>
<svg class="a" style="left:357px;top:1035px" width="30" height="30" viewBox="0 0 30 30"><defs><linearGradient id="e1" x1="0" y1="0" x2="1" y2="0.6"><stop offset="0" stop-color="#1a8fd8"/><stop offset="0.55" stop-color="#2fc3c8"/><stop offset="1" stop-color="#6fdc4c"/></linearGradient><linearGradient id="e2" x1="0" y1="0" x2="0" y2="1"><stop offset="0" stop-color="#1c7fd6"/><stop offset="1" stop-color="#0c4aa0"/></linearGradient></defs><path d="M1 15 C1 6 8 0 16 0 C25 0 30 6.5 30 13 C30 17.5 26.5 20 22.5 20 C19.5 20 18 18.6 18 17.2 C18 16 19.2 15.6 19.2 13.6 C19.2 11.2 17.2 9.4 14.6 9.4 C9.8 9.4 6.6 13.4 6.6 18 C3 18 1 16.5 1 15 Z" fill="url(#e1)"/><path d="M1 15 C1 23.5 7.5 30 16 30 C21 30 25.5 27.5 27.8 24 C28.2 23.2 27.5 22.8 26.8 23.2 C25.2 24 23.6 24.4 21.6 24.4 C15.6 24.4 11 20.2 11 15.4 C11 13.2 12.2 11 14.2 9.6 C8 9.6 4.5 14 4.5 18.5 C2.5 18 1 16.5 1 15 Z" fill="url(#e2)"/><path d="M6.2 19.5 C7.6 25.6 12 29.6 17.5 29.9 C12 27 11.4 22.5 11.1 19 C10.9 15.6 12 11.6 14.4 9.5 C9.8 9.5 6 13.4 6.2 19.5 Z" fill="#1a9de0" opacity=".75"/></svg>
<div class="a" style="left:368.0px;top:1070.5px;width:8px;height:3px;background:#8d8d8d;border-radius:2px"></div>
<svg class="a" style="left:412px;top:1035px" width="30" height="30" viewBox="0 0 30 30"><path d="M21.5 0.5 L29.5 4 V26 L21.5 29.5 Z" fill="#2aa7f2"/><path d="M21.5 0.5 L22.5 6.5 L3.5 22 L0.8 19.6 Q0 18.8 0.8 18 Z" fill="#1588d2"/><path d="M21.5 29.5 L22.5 23.5 L3.5 8 L0.8 10.4 Q0 11.2 0.8 12 Z" fill="#1a95e0"/><path d="M21.5 8 V22 L12.5 15 Z" fill="#1c212a"/></svg>
<div class="a" style="left:423.0px;top:1070.5px;width:8px;height:3px;background:#8d8d8d;border-radius:2px"></div>
<svg class="a" style="left:466px;top:1038px" width="31" height="23" viewBox="0 0 31 23"><rect x="0.5" y="0.5" width="30" height="22" fill="#eef3f8" stroke="#b8c0c8"/><path d="M2 21 V15 L5 14 L7 5 L9 10 L11 11 L13 12.5 L15 15 L17 16 L19 14 L21 5 L23 12 L25 13.5 L27 15 L29 16 V21 Z" fill="#7cc4ee" stroke="#2d8fd0" stroke-width="0.9"/></svg>
<div class="a" style="left:478.0px;top:1070.5px;width:8px;height:3px;background:#8d8d8d;border-radius:2px"></div>
<div class="a" style="left:512px;top:1025px;width:50px;height:50px;background:#313131;border:1px solid #3b3b3b;border-radius:5px"></div>
<svg class="a" style="left:521px;top:1035px" width="31" height="31" viewBox="2.800 2.800 26.400 26.400"><defs><linearGradient id="abk" x1="0" y1="0" x2="1" y2="0.6"><stop offset="0" stop-color="#0a57a8"/><stop offset="0.65" stop-color="#19c2ff"/><stop offset="1" stop-color="#0c7fd0"/></linearGradient><linearGradient id="adk" x1="0" y1="0" x2="1" y2="1"><stop offset="0" stop-color="#1173c4"/><stop offset="1" stop-color="#0a3f8c"/></linearGradient><linearGradient id="ask" x1="0" y1="0" x2="1" y2="0"><stop offset="0" stop-color="#9b9ea4"/><stop offset="0.5" stop-color="#f2f3f5"/><stop offset="1" stop-color="#a9acb2"/></linearGradient></defs><g fill="#f4f6f8"><rect x="13" y="3.500" width="6" height="6"/><rect x="13" y="22.500" width="6" height="6"/><rect x="3.500" y="13" width="6" height="6"/><rect x="22.500" y="13" width="6" height="6"/><rect x="7" y="7" width="5" height="5" transform="rotate(45 9.500 9.500)"/><rect x="20" y="7" width="5" height="5" transform="rotate(45 22.500 9.500)"/><rect x="7" y="20" width="5" height="5" transform="rotate(45 9.500 22.500)"/><rect x="20" y="20" width="5" height="5" transform="rotate(45 22.500 22.500)"/></g><path d="M27.500 4 C29.500 9 28 20 23 25 L21 23 C25 18 26.500 10 25.500 6 Z" fill="#8f939a"/><path d="M4.500 28 C2.500 23 4 12 9 7 L11 9 C7 14 5.500 22 6.500 26 Z" fill="#8f939a"/><path d="M6.500 27.500 C5 21 7 12.500 10.500 9 C13 10 14.500 12 15.500 14.500 C11.500 17.500 8.500 22.500 6.500 27.500 Z" fill="url(#ask)"/><path d="M25.500 4.500 C27 11 25 19.500 21.500 23 C19 22 17.500 20 16.500 17.500 C20.500 14.500 23.500 9.500 25.500 4.500 Z" fill="url(#ask)"/><path d="M4.500 4.500 C11 3 20 5 24 9.500 C22 12.500 20 14 18 14.500 C14.500 10.500 9.500 6.500 4.500 4.500 Z" fill="url(#abk)"/><path d="M4.500 4.500 C3.500 7 4 10 5.500 12 L7.500 10.500 C6.500 9 6 7 6.500 5.500 Z" fill="#0a4fa0"/><path d="M27.500 27.500 C21 29 12 27 8 22.500 C10 19.500 12 18 14 17.500 C17.500 21.500 22.500 25.500 27.500 27.500 Z" fill="url(#adk)"/><path d="M27.500 27.500 C28.500 25 28 22 26.500 20 L24.500 21.500 C25.500 23 26 25 25.500 26.500 Z" fill="#0b59ac"/></svg>
<div class="a" style="left:527px;top:1070.5px;width:20px;height:3.5px;background:#f47a5c;border-radius:2px"></div>
<svg class="a" style="left:1610px;top:1040px" width="210" height="24" viewBox="0 0 210 24"><path d="M2.5 13 L10 5.8 L17.5 13" fill="none" stroke="#fff" stroke-width="1.2"/><rect x="30" y="0" width="20" height="20" fill="#f3c7c7"/><rect x="31.5" y="1.5" width="17" height="17" fill="#f9e3e3" opacity=".6"/><path d="M34 4.5 L39.5 16 L45.5 3.5" fill="none" stroke="#d3202a" stroke-width="2.6"/><g fill="none" stroke="#fff" stroke-width="1.5" stroke-linecap="round"><path d="M121 7.5 Q130 -0.5 139 7.500"/><path d="M124 10.8 Q130 5.200 136 10.8"/><path d="M127 13.8 Q130 11 133 13.8"/></g><circle cx="130" cy="16" r="1.3" fill="#fff"/><g fill="none" stroke="#fff" stroke-width="1.3" stroke-linejoin="round" stroke-linecap="round"><path d="M150.500 7 H154 L158.500 3 V17 L154 13 H150.500 Z"/><path d="M161.500 7 Q163.500 10 161.500 13"/><path d="M164.500 4.500 Q168.500 10 164.500 15.500"/><path d="M167.500 2 Q173 10 167.500 18"/></g><g fill="none" stroke="#fff" stroke-width="1.5" stroke-linejoin="round"><rect x="185.500" y="5" width="12" height="10" rx="1.5"/><path d="M199 8 V12" stroke-width="2"/></g><rect x="187.500" y="7" width="8" height="6" fill="#fff"/><path d="M181.500 1 V4.500 M184.500 1 V4.500 M180 4.500 H186 V7.500 Q186 9.500 183 9.500 Q180 9.500 180 7.500 Z M183 9.500 V16 H186" fill="none" stroke="#fff" stroke-width="1.3"/></svg>
<div class="t" style="left:1679.00px;top:1042.55px;font-size:15px;color:#fff;transform:scaleX(0.8768);">ENG</div>
<div class="t" style="left:1837.50px;top:1031.35px;font-size:15px;color:#fff;transform:scaleX(0.9315);">11:06 AM</div>
<div class="t" style="left:1830.00px;top:1051.85px;font-size:15px;color:#fff;transform:scaleX(0.9815);">7/21/2022</div>
<!-- dialog -->
<div class="a" style="left:556px;top:256px;width:940px;height:589px;border-radius:8px;overflow:hidden;background:#191919">
</div>
<div class="a" style="left:556px;top:256px;width:940px;height:38px;background:#000;border-radius:8px 8px 0 0"></div>
<div class="a" style="left:556px;top:294px;width:940px;height:1px;background:#2b2b2b"></div>
<svg class="a" style="left:566px;top:264px" width="20" height="20" viewBox="2.800 2.800 26.400 26.400"><defs><linearGradient id="abd" x1="0" y1="0" x2="1" y2="0.6"><stop offset="0" stop-color="#0a57a8"/><stop offset="0.65" stop-color="#19c2ff"/><stop offset="1" stop-color="#0c7fd0"/></linearGradient><linearGradient id="add" x1="0" y1="0" x2="1" y2="1"><stop offset="0" stop-color="#1173c4"/><stop offset="1" stop-color="#0a3f8c"/></linearGradient><linearGradient id="asd" x1="0" y1="0" x2="1" y2="0"><stop offset="0" stop-color="#9b9ea4"/><stop offset="0.5" stop-color="#f2f3f5"/><stop offset="1" stop-color="#a9acb2"/></linearGradient></defs><g fill="#f4f6f8"><rect x="13" y="3.500" width="6" height="6"/><rect x="13" y="22.500" width="6" height="6"/><rect x="3.500" y="13" width="6" height="6"/><rect x="22.500" y="13" width="6" height="6"/><rect x="7" y="7" width="5" height="5" transform="rotate(45 9.500 9.500)"/><rect x="20" y="7" width="5" height="5" transform="rotate(45 22.500 9.500)"/><rect x="7" y="20" width="5" height="5" transform="rotate(45 9.500 22.500)"/><rect x="20" y="20" width="5" height="5" transform="rotate(45 22.500 22.500)"/></g><path d="M27.500 4 C29.500 9 28 20 23 25 L21 23 C25 18 26.500 10 25.500 6 Z" fill="#8f939a"/><path d="M4.500 28 C2.500 23 4 12 9 7 L11 9 C7 14 5.500 22 6.500 26 Z" fill="#8f939a"/><path d="M6.500 27.500 C5 21 7 12.500 10.500 9 C13 10 14.500 12 15.500 14.500 C11.500 17.500 8.500 22.500 6.500 27.500 Z" fill="url(#asd)"/><path d="M25.500 4.500 C27 11 25 19.500 21.500 23 C19 22 17.500 20 16.500 17.500 C20.500 14.500 23.500 9.500 25.500 4.500 Z" fill="url(#asd)"/><path d="M4.500 4.500 C11 3 20 5 24 9.500 C22 12.500 20 14 18 14.500 C14.500 10.500 9.500 6.500 4.500 4.500 Z" fill="url(#abd)"/><path d="M4.500 4.500 C3.500 7 4 10 5.500 12 L7.500 10.500 C6.500 9 6 7 6.500 5.500 Z" fill="#0a4fa0"/><path d="M27.500 27.500 C21 29 12 27 8 22.500 C10 19.500 12 18 14 17.500 C17.500 21.500 22.500 25.500 27.500 27.500 Z" fill="url(#add)"/><path d="M27.500 27.500 C28.500 25 28 22 26.500 20 L24.500 21.500 C25.500 23 26 25 25.500 26.500 Z" fill="#0b59ac"/></svg>
<div class="t" style="left:591.30px;top:266.85px;font-size:15px;color:#fff;transform:scaleX(0.9729);">Open</div>
<svg class="a" style="left:1468px;top:268px" width="14" height="14" viewBox="0 0 14 14"><path d="M1 1 L13 13 M13 1 L1 13" stroke="#fff" stroke-width="1.2"/></svg>
<svg class="a" style="left:570px;top:316px" width="150" height="24" viewBox="0 0 150 24"><g fill="none" stroke-linecap="butt" stroke-linejoin="miter"><path d="M19.500 12 H5.500 M11.500 5.500 L5 12 L11.500 18.500" stroke="#a6a6a6" stroke-width="2"/><path d="M48.500 12 H62.500 M56.500 5.500 L63 12 L56.500 18.500" stroke="#a6a6a6" stroke-width="2"/><path d="M88.500 9.500 L93.500 14.500 L98.500 9.500" stroke="#a6a6a6" stroke-width="2"/><path d="M130 19.500 V5.500 M123.500 11.500 L130 5 L136.500 11.500" stroke="#fff" stroke-width="1.600"/></g></svg>
<div class="a" style="left:727px;top:307px;width:487px;height:42px;border:1px solid #4c4c4c;background:#191919"></div>
<svg class="a" style="left:737px;top:318px" width="22" height="17" viewBox="0 0 21 17"><defs><linearGradient id="fy" x1="0" y1="0" x2="0" y2="1"><stop offset="0" stop-color="#ffe08a"/><stop offset="1" stop-color="#f8c43e"/></linearGradient></defs><path d="M0.500 2 Q0.500 0.500 2 0.500 H7 L9 2.500 H19 Q20.500 2.500 20.500 4 V6 H0.500 Z" fill="#e8a317"/><path d="M0.500 4.500 H20.500 V15 Q20.500 16.500 19 16.500 H2 Q0.500 16.500 0.500 15 Z" fill="url(#fy)"/></svg>
<div class="t" style="left:765.00px;top:318.15px;font-size:15px;color:#bdbdbd;transform:scaleX(1.1987);">«</div>
<div class="t" style="left:785.00px;top:319.65px;font-size:15px;color:#fff;transform:scaleX(0.9555);">Thach Anh ITT</div>
<svg class="a" style="left:888.5px;top:322.5px" width="7" height="10" viewBox="0 0 8 12"><path d="M1.500 1 L6.500 6 L1.500 11" fill="none" stroke="#f0f0f0" stroke-width="2"/></svg>
<div class="t" style="left:907.50px;top:319.65px;font-size:15px;color:#fff;transform:scaleX(0.8731);">TAK</div>
<svg class="a" style="left:942.5px;top:322.5px" width="7" height="10" viewBox="0 0 8 12"><path d="M1.500 1 L6.500 6 L1.500 11" fill="none" stroke="#f0f0f0" stroke-width="2"/></svg>
<div class="t" style="left:961.00px;top:319.65px;font-size:15px;color:#fff;transform:scaleX(0.9941);">An Phong</div>
<svg class="a" style="left:1136.5px;top:325px" width="11" height="8" viewBox="0 0 12 8"><path d="M1 1.500 L6 6.500 L11 1.500" fill="none" stroke="#d8d8d8" stroke-width="1.3"/></svg>
<svg class="a" style="left:1179px;top:319px" width="18" height="18" viewBox="0 0 18 18"><path d="M15.500 9 A6.500 6.500 0 1 1 12.800 3.700" fill="none" stroke="#e8e8e8" stroke-width="1.400"/><path d="M11 1.500 H15 V5.500" fill="none" stroke="#e8e8e8" stroke-width="1.400"/></svg>
<div class="a" style="left:1229px;top:307px;width:252px;height:42px;border:1px solid #4c4c4c;background:#191919"></div>
<div class="t" style="left:1240.00px;top:319.65px;font-size:15px;color:#8f8f8f;transform:scaleX(0.9678);">Search An Phong</div>
<svg class="a" style="left:1447px;top:320px" width="16" height="16" viewBox="0 0 16 16"><circle cx="10" cy="5.800" r="3.600" fill="none" stroke="#c8c8c8" stroke-width="1.700"/><path d="M7.300 8.500 L2 14" stroke="#c8c8c8" stroke-width="2" stroke-linecap="round"/></svg>
<div class="a" style="left:556px;top:362px;width:940px;height:39px;background:#202020"></div>
<div class="t" style="left:579.00px;top:373.15px;font-size:15px;color:#fff;transform:scaleX(0.9611);">Organize</div>
<svg class="a" style="left:644px;top:378px" width="11" height="7" viewBox="0 0 11 7"><path d="M0.500 0.500 H10.500 L5.500 6 Z" fill="#d8d8d8"/></svg>
<div class="t" style="left:692.50px;top:373.15px;font-size:15px;color:#fff;transform:scaleX(1.0112);">New folder</div>
<svg class="a" style="left:1343px;top:371px" width="22" height="21" viewBox="0 0 22 21"><rect x="0.500" y="0.500" width="20" height="19.500" rx="2.500" fill="#e4e4e4"/><path d="M3 4.600 H18 M3 8.300 H18 M3 12 H18 M3 15.700 H18" stroke="#2a2a2a" stroke-width="1.600"/></svg>
<svg class="a" style="left:1375px;top:378px" width="11" height="7" viewBox="0 0 11 7"><path d="M0.500 0.500 H10.500 L5.500 6 Z" fill="#d8d8d8"/></svg>
<svg class="a" style="left:1412px;top:374px" width="21" height="15" viewBox="0 0 21 15"><rect x="0.500" y="0.500" width="20" height="14" fill="#f3f3f3" stroke="#9a9a9a"/><rect x="1.500" y="2.500" width="4" height="11" fill="#fff"/><rect x="6.500" y="2.500" width="5" height="11" fill="#fff"/><rect x="11.500" y="2.500" width="8" height="11" fill="#3f8fe0"/><path d="M6 2 V14 M11.300 2 V14" stroke="#555" stroke-width=".8"/></svg>
<svg class="a" style="left:1457px;top:371px" width="20" height="20" viewBox="0 0 20 20"><circle cx="10" cy="10" r="10" fill="#1683e0"/><text x="10" y="14.600" font-family="Liberation Sans,sans-serif" font-weight="bold" font-size="13" fill="#fff" text-anchor="middle">?</text></svg>
<div class="a" style="left:753px;top:401px;width:1px;height:349px;background:#2b2b2b"></div>
<div class="a" style="left:559px;top:407px;width:170px;height:34px;background:#333;border-radius:3px"></div>
<svg class="a" style="left:580.5px;top:418.0px" width="8" height="12" viewBox="0 0 8 12"><path d="M1.500 1 L6.500 6 L1.500 11" fill="none" stroke="#8e8e8e" stroke-width="1.9"/></svg><svg class="a" style="left:603px;top:414px" width="21" height="17" viewBox="0 0 21 17"><defs><linearGradient id="fy" x1="0" y1="0" x2="0" y2="1"><stop offset="0" stop-color="#ffe08a"/><stop offset="1" stop-color="#f8c43e"/></linearGradient></defs><path d="M0.500 2 Q0.500 0.500 2 0.500 H7 L9 2.500 H19 Q20.500 2.500 20.500 4 V6 H0.500 Z" fill="#e8a317"/><path d="M0.500 4.500 H20.500 V15 Q20.500 16.500 19 16.500 H2 Q0.500 16.500 0.500 15 Z" fill="url(#fy)"/></svg><div class="t" style="left:629.80px;top:415.65px;font-size:15px;color:#fff;transform:scaleX(0.9575);">Thach Anh ITT</div>
<div class="a" style="left:556px;top:445px;width:174.5px;height:38px;overflow:hidden"><div class="a" style="left:-556px;top:-445px"><svg class="a" style="left:580.5px;top:458.0px" width="8" height="12" viewBox="0 0 8 12"><path d="M1.500 1 L6.500 6 L1.500 11" fill="none" stroke="#8e8e8e" stroke-width="1.9"/></svg><svg class="a" style="left:603px;top:454px" width="21" height="17" viewBox="0 0 21 17"><defs><linearGradient id="fy" x1="0" y1="0" x2="0" y2="1"><stop offset="0" stop-color="#ffe08a"/><stop offset="1" stop-color="#f8c43e"/></linearGradient></defs><path d="M0.500 2 Q0.500 0.500 2 0.500 H7 L9 2.500 H19 Q20.500 2.500 20.500 4 V6 H0.500 Z" fill="#e8a317"/><path d="M0.500 4.500 H20.500 V15 Q20.500 16.500 19 16.500 H2 Q0.500 16.500 0.500 15 Z" fill="url(#fy)"/></svg><div class="t" style="left:629.80px;top:455.65px;font-size:15px;color:#fff;">ThachAnhTeam</div></div></div>
<svg class="a" style="left:568.0px;top:510px" width="12" height="8" viewBox="0 0 12 8"><path d="M1 1.500 L6 6.500 L11 1.500" fill="none" stroke="#dcdcdc" stroke-width="2"/></svg><svg class="a" style="left:593px;top:505px" width="21" height="20" viewBox="0 0 21 20"><defs><linearGradient id="pcg" x1="0" y1="0" x2="1" y2="1"><stop offset="0" stop-color="#35d0e8"/><stop offset="1" stop-color="#1579d8"/></linearGradient></defs><rect x="0.500" y="0.500" width="20" height="14" rx="1" fill="url(#pcg)"/><rect x="9" y="14.500" width="3" height="3" fill="#c8c8c8"/><rect x="5.500" y="17.500" width="10" height="1.500" fill="#d8d8d8"/></svg><div class="t" style="left:619.30px;top:505.15px;font-size:15px;color:#fff;transform:scaleX(0.9317);">This PC</div>
<svg class="a" style="left:580.5px;top:548.0px" width="8" height="12" viewBox="0 0 8 12"><path d="M1.500 1 L6.500 6 L1.500 11" fill="none" stroke="#8e8e8e" stroke-width="1.9"/></svg><svg class="a" style="left:603px;top:546.500px" width="21" height="17" viewBox="0 0 21 17"><defs><linearGradient id="dkg" x1="0" y1="0" x2="1" y2="1"><stop offset="0" stop-color="#3ad0f0"/><stop offset="1" stop-color="#147ad0"/></linearGradient></defs><rect x="0.500" y="0.500" width="20" height="14" rx="2" fill="url(#dkg)"/><rect x="2.500" y="3" width="2.500" height="2.500" fill="#fff"/><rect x="2.500" y="7" width="2.500" height="2.500" fill="#fff"/><rect x="14" y="15" width="1.500" height="1.500" fill="#9ad"/><rect x="17" y="15" width="1.500" height="1.500" fill="#9ad"/></svg><div class="t" style="left:629.80px;top:545.65px;font-size:15px;color:#fff;transform:scaleX(0.9759);">Desktop</div>
<svg class="a" style="left:580.5px;top:588.0px" width="8" height="12" viewBox="0 0 8 12"><path d="M1.500 1 L6.500 6 L1.500 11" fill="none" stroke="#8e8e8e" stroke-width="1.9"/></svg><svg class="a" style="left:605px;top:583px" width="17" height="21" viewBox="0 0 17 21"><defs><linearGradient id="dcg" x1="0" y1="0" x2="0" y2="1"><stop offset="0" stop-color="#c5d3e8"/><stop offset="1" stop-color="#7f9cc8"/></linearGradient></defs><rect x="0.500" y="0.500" width="16" height="20" rx="2" fill="url(#dcg)"/><path d="M3.500 5 H8 M3.500 8 H13.500 M3.500 11 H13.500 M10 5 H13.500" stroke="#fff" stroke-width="1.400"/></svg><div class="t" style="left:629.80px;top:585.65px;font-size:15px;color:#fff;transform:scaleX(1.0044);">Documents</div>
<svg class="a" style="left:580.5px;top:628.0px" width="8" height="12" viewBox="0 0 8 12"><path d="M1.500 1 L6.500 6 L1.500 11" fill="none" stroke="#8e8e8e" stroke-width="1.9"/></svg><svg class="a" style="left:605px;top:623px" width="17" height="22" viewBox="0 0 17 22"><path d="M8.500 1 V15 M2.500 9.500 L8.500 15.500 L14.500 9.500" fill="none" stroke="#2dc48a" stroke-width="1.800"/><path d="M1 20 H16" stroke="#2dc48a" stroke-width="2"/></svg><div class="t" style="left:629.80px;top:625.65px;font-size:15px;color:#fff;transform:scaleX(0.9931);">Downloads</div>
<svg class="a" style="left:580.5px;top:668.0px" width="8" height="12" viewBox="0 0 8 12"><path d="M1.500 1 L6.500 6 L1.500 11" fill="none" stroke="#8e8e8e" stroke-width="1.9"/></svg><svg class="a" style="left:603px;top:663px" width="21" height="21" viewBox="0 0 21 21"><defs><linearGradient id="mug" x1="0" y1="0" x2="1" y2="1"><stop offset="0" stop-color="#f39a4a"/><stop offset="1" stop-color="#d0548a"/></linearGradient></defs><circle cx="10.500" cy="10.500" r="10" fill="url(#mug)"/><path d="M9.500 14.500 V5.500 L14 7" fill="none" stroke="#fff" stroke-width="1.600"/><circle cx="8" cy="14.500" r="2.200" fill="#fff"/></svg><div class="t" style="left:629.80px;top:665.65px;font-size:15px;color:#fff;transform:scaleX(1.0135);">Music</div>
<svg class="a" style="left:580.5px;top:708.0px" width="8" height="12" viewBox="0 0 8 12"><path d="M1.500 1 L6.500 6 L1.500 11" fill="none" stroke="#8e8e8e" stroke-width="1.9"/></svg><svg class="a" style="left:604px;top:704px" width="19" height="20" viewBox="0 0 19 20"><rect x="0.500" y="0.500" width="18" height="19" rx="2.500" fill="#a24de0"/><path d="M7 6 L13.500 10 L7 14 Z" fill="#fff"/><path d="M2.500 2.500 V17.500 M16.500 2.500 V17.500" stroke="#7a2fc0" stroke-width="1.600" stroke-dasharray="2 1.600"/></svg><div class="t" style="left:629.80px;top:705.65px;font-size:15px;color:#fff;transform:scaleX(1.0153);">Phim</div>
<div class="a" style="left:556px;top:742px;width:197px;height:8px;overflow:hidden"><div class="a" style="left:48.500px;top:2px;width:18px;height:14px;border-radius:2px;background:#2a8ae0"></div><div class="a" style="left:60px;top:4.500px;width:3px;height:3px;border-radius:2px;background:#fff"></div><div class="a" style="left:26px;top:6px;width:3px;height:2px;background:#777"></div><div class="t" style="left:74.500px;top:3.500px;font-size:15px;color:#fff;transform:scaleX(.94);transform-origin:0 0">Pictures</div></div>
<div class="a" style="left:740px;top:614px;width:2px;height:74px;background:#9d9d9d;border-radius:1px"></div>
<div class="a" style="left:1095px;top:401px;width:1px;height:32px;background:#636363"></div>
<div class="a" style="left:1195px;top:401px;width:1px;height:32px;background:#636363"></div>
<div class="a" style="left:1375px;top:401px;width:1px;height:32px;background:#636363"></div>
<div class="t" style="left:794.00px;top:409.65px;font-size:15px;color:#fff;">Name</div>
<svg class="a" style="left:934px;top:401px" width="12" height="7" viewBox="0 0 12 7"><path d="M1.500 6 L6 1.500 L10.500 6" fill="none" stroke="#bdbdbd" stroke-width="1.200"/></svg>
<div class="t" style="left:1104.00px;top:409.65px;font-size:15px;color:#fff;transform:scaleX(0.9289);">Status</div>
<div class="t" style="left:1204.00px;top:409.65px;font-size:15px;color:#fff;transform:scaleX(1.0103);">Date modified</div>
<div class="t" style="left:1384.00px;top:409.65px;font-size:15px;color:#fff;transform:scaleX(0.9225);">Type</div>
<div class="a" style="left:774px;top:519px;width:722px;height:31px;background:#777"></div>
<svg class="a" style="left:781px;top:447.0px" width="15" height="19" viewBox="0 0 15 19"><path d="M1.500 0.500 H10.500 L14.500 4.500 V17.500 Q14.500 18.500 13.500 18.500 H1.500 Q0.500 18.500 0.500 17.500 V1.500 Q0.500 0.500 1.500 0.500 Z" fill="#fbfbfb"/><path d="M10.500 0.500 V3.500 Q10.500 4.500 11.500 4.500 H14.500 Z" fill="#cfcfcf"/></svg>
<div class="t" style="left:803.50px;top:449.65px;font-size:15px;color:#fff;transform:scaleX(0.9311);">LANBridge_02_00000FD9_7-8-2022.cfsch</div>
<svg class="a" style="left:1102px;top:450.5px" width="14" height="14" viewBox="0 0 14 14"><circle cx="7" cy="7" r="6.200" fill="#e9f7ec" stroke="#2ea043" stroke-width="1.600"/><circle cx="7" cy="7" r="4.600" fill="#2ea043"/><path d="M4.600 7.200 L6.300 8.900 L9.500 5.400" fill="none" stroke="#fff" stroke-width="1.300"/></svg>
<div class="t" style="left:1204.00px;top:449.65px;font-size:15px;color:#fff;transform:scaleX(0.9585);">7/8/2022 4:38 PM</div>
<div class="t" style="left:1384.00px;top:449.65px;font-size:15px;color:#fff;transform:scaleX(0.8999);">CFSCH File</div>
<svg class="a" style="left:781px;top:485.5px" width="15" height="19" viewBox="0 0 15 19"><path d="M1.500 0.500 H10.500 L14.500 4.500 V17.500 Q14.500 18.500 13.500 18.500 H1.500 Q0.500 18.500 0.500 17.500 V1.500 Q0.500 0.500 1.500 0.500 Z" fill="#fbfbfb"/><path d="M10.500 0.500 V3.500 Q10.500 4.500 11.500 4.500 H14.500 Z" fill="#cfcfcf"/></svg>
<div class="t" style="left:803.50px;top:488.15px;font-size:15px;color:#fff;transform:scaleX(0.9302);">LANBridge_02_00000FD9_7-15-2022.cfsch</div>
<svg class="a" style="left:1102px;top:489px" width="14" height="14" viewBox="0 0 14 14"><circle cx="7" cy="7" r="6.200" fill="#e9f7ec" stroke="#2ea043" stroke-width="1.600"/><circle cx="7" cy="7" r="4.600" fill="#2ea043"/><path d="M4.600 7.200 L6.300 8.900 L9.500 5.400" fill="none" stroke="#fff" stroke-width="1.300"/></svg>
<div class="t" style="left:1204.00px;top:488.15px;font-size:15px;color:#fff;transform:scaleX(0.9545);">7/15/2022 5:49 PM</div>
<div class="t" style="left:1384.00px;top:488.15px;font-size:15px;color:#fff;transform:scaleX(0.8999);">CFSCH File</div>
<svg class="a" style="left:781px;top:524.0px" width="15" height="19" viewBox="0 0 15 19"><path d="M1.500 0.500 H10.500 L14.500 4.500 V17.500 Q14.500 18.500 13.500 18.500 H1.500 Q0.500 18.500 0.500 17.500 V1.500 Q0.500 0.500 1.500 0.500 Z" fill="#fbfbfb"/><path d="M10.500 0.500 V3.500 Q10.500 4.500 11.500 4.500 H14.500 Z" fill="#cfcfcf"/></svg>
<div class="t" style="left:803.50px;top:526.65px;font-size:15px;color:#fff;transform:scaleX(0.9302);">LANBridge_02_00000FD9_7-19-2022.cfsch</div>
<svg class="a" style="left:1102px;top:527.5px" width="14" height="14" viewBox="0 0 14 14"><circle cx="7" cy="7" r="6.200" fill="#e9f7ec" stroke="#2ea043" stroke-width="1.600"/><circle cx="7" cy="7" r="4.600" fill="#2ea043"/><path d="M4.600 7.200 L6.300 8.900 L9.500 5.400" fill="none" stroke="#fff" stroke-width="1.300"/></svg>
<div class="t" style="left:1204.00px;top:526.65px;font-size:15px;color:#fff;transform:scaleX(0.9727);">7/19/2022 7:00 AM</div>
<div class="t" style="left:1384.00px;top:526.65px;font-size:15px;color:#fff;transform:scaleX(0.8999);">CFSCH File</div>
<div class="a" style="left:777px;top:738.5px;width:585px;height:2px;background:#9d9d9d;border-radius:1px"></div>
<div class="a" style="left:1362px;top:729px;width:112px;height:1px;background:#000"></div>
<div class="a" style="left:556px;top:750px;width:940px;height:95px;background:#383838;border-radius:0 0 8px 8px"></div>
<div class="t" style="left:718.50px;top:768.15px;font-size:15px;color:#fff;transform:scaleX(0.9639);">File name:</div>
<div class="a" style="left:792px;top:762px;width:432px;height:29px;border:1px solid #8a8a8a;background:#383838"></div>
<div class="t" style="left:797.50px;top:769.15px;font-size:15px;color:#fff;transform:scaleX(0.9302);">LANBridge_02_00000FD9_7-19-2022.cfsch</div>
<svg class="a" style="left:1207.5px;top:773px" width="11" height="8" viewBox="0 0 12 8"><path d="M1 1.500 L6 6.500 L11 1.500" fill="none" stroke="#d8d8d8" stroke-width="1.3"/></svg>
<div class="a" style="left:1240px;top:762px;width:235px;height:28px;border:1px solid #8a8a8a;background:#383838"></div>
<div class="t" style="left:1245.00px;top:768.15px;font-size:15px;color:#fff;transform:scaleX(0.9531);">CF Schedules Backups (*.cfsch)</div>
<svg class="a" style="left:1458.5px;top:772px" width="11" height="8" viewBox="0 0 12 8"><path d="M1 1.500 L6 6.500 L11 1.500" fill="none" stroke="#d8d8d8" stroke-width="1.3"/></svg>
<div class="a" style="left:1241px;top:799px;width:107px;height:30px;background:#404040;border:1px solid #9b9b9b;border-radius:5px"></div>
<div class="t" style="left:1276.00px;top:805.65px;font-size:15px;color:#fff;transform:scaleX(0.9811);">Open</div>
<div class="a" style="left:1366px;top:799px;width:107px;height:30px;background:#2e2e2e;border:1px solid #9b9b9b;border-radius:5px"></div>
<div class="t" style="left:1397.00px;top:805.65px;font-size:15px;color:#fff;transform:scaleX(0.9637);">Cancel</div>
<svg class="a" style="left:1483px;top:832px" width="9" height="9" viewBox="0 0 9 9"><rect x="6" y="0" width="2" height="2" fill="#b0b0b0"/><rect x="3" y="3" width="2" height="2" fill="#b0b0b0"/><rect x="6" y="3" width="2" height="2" fill="#b0b0b0"/><rect x="0" y="6" width="2" height="2" fill="#b0b0b0"/><rect x="3" y="6" width="2" height="2" fill="#b0b0b0"/><rect x="6" y="6" width="2" height="2" fill="#b0b0b0"/></svg>
</body></html>
